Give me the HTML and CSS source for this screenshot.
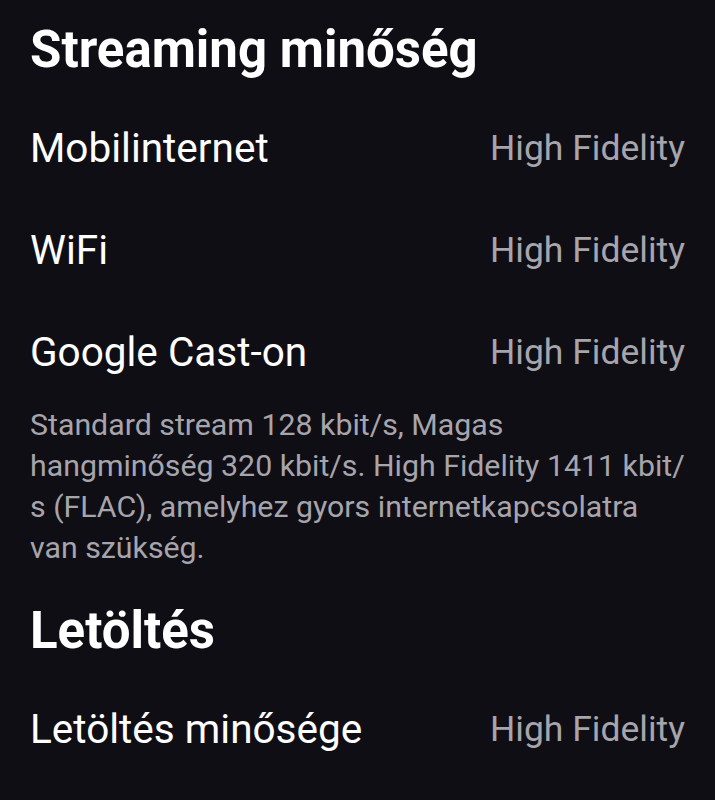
FILE: index.html
```html
<!DOCTYPE html>
<html lang="hu">

<head>
  <meta charset="UTF-8">
  <meta name="viewport" content="width=device-width, initial-scale=1.0">
  <title>Beállítások</title>
  <link rel="stylesheet" href="styles.css">
</head>

<body>
  <div id="settings">
    <section class="group">
      <h2 class="group-title">Streaming minőség</h2>
      <div class="row">
        <span class="row-label">Mobilinternet</span>
        <span class="row-value">High Fidelity</span>
      </div>
      <div class="row">
        <span class="row-label">WiFi</span>
        <span class="row-value">High Fidelity</span>
      </div>
      <div class="row">
        <span class="row-label">Google Cast-on</span>
        <span class="row-value">High Fidelity</span>
      </div>
      <p class="note">Standard stream 128 kbit/s, Magas hangminőség 320 kbit/s. High Fidelity 1411 kbit/<wbr>s (FLAC), amelyhez gyors internetkapcsolatra van szükség.</p>
    </section>
    <section class="group">
      <h2 class="group-title">Letöltés</h2>
      <div class="row">
        <span class="row-label">Letöltés minősége</span>
        <span class="row-value">High Fidelity</span>
      </div>
    </section>
  </div>
</body>

</html>
```

FILE: styles.css
```css
body {
  font-family: Roboto, 'Noto Sans', sans-serif;
  margin: 0;
  padding: 0;
  background-color: #100e15;
  color: #fff;
}

#settings {
  display: flex;
  flex-direction: column;
  padding: 22px 30px 0 30px;
}

.group + .group {
  margin-top: 35px;
}

.group-title {
  margin: 0 0 19px 0;
  font-size: 51px;
  font-weight: 700;
  line-height: 56px;
}

.row {
  display: flex;
  justify-content: space-between;
  align-items: center;
  height: 102px;
}

.row-label {
  font-size: 40.5px;
}

.row-value {
  font-size: 35.5px;
  color: #a7a5ac;
}

.note {
  margin: 1px 0 0 0;
  font-size: 30.3px;
  line-height: 41px;
  color: #a7a5ac;
}
```
